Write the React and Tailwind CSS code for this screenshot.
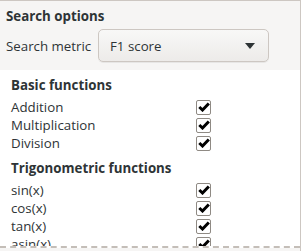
import React from 'react'

const basic = ["Addition", "Multiplication", "Division"];
const trig = ["sin(x)", "cos(x)", "tan(x)", "asin(x)"];

const Check = () => (
  <span className="w-[15px] h-[15px] rounded-[2px] border border-[#8f8a84] bg-white flex items-center justify-center">
    <svg width="12" height="10" viewBox="0 0 12 10">
      <path d="M1.3 5 L4.5 8 L10.8 1.5" fill="none" stroke="#000" strokeWidth="3" strokeLinejoin="miter" />
    </svg>
  </span>
)

const Row = ({ label }) => (
  <div className="flex items-center h-[18px]">
    <span className="w-[185px] text-[#2e3436]">{label}</span>
    <Check />
  </div>
)

const App = () => {
  return (
    <div className="w-[301px] h-[251px] overflow-hidden bg-[#f6f5f4] border-t border-r border-[#cdc7c2] text-[13.3px] leading-[18px]" style={{ fontFamily: '"Open Sans", "Noto Sans", sans-serif' }}>
      {/* ----Search options---- */}
      <div className='px-[6px] pt-[6px] h-[69px]'>
        <p className='font-bold text-[#2e3436]'>Search options</p>
        <div className='flex items-center mt-[4px]'>
          <span className='w-[92px] text-[#2e3436]'>Search metric</span>
          <div className='w-[171px] h-[33px] flex items-center justify-between px-[11px] rounded-[5px] border border-[#cdc7c2] bg-gradient-to-b from-[#f8f8f7] to-[#edebe9] shadow-[0_1px_0_rgba(0,0,0,0.06)]'>
            <span className='text-[#2e3436]'>F1 score</span>
            <svg width="10" height="6" viewBox="0 0 10 6" className='mr-[2px]'>
              <path d="M0 0 H10 L5 6 Z" fill="#2e3436" />
            </svg>
          </div>
        </div>
      </div>

      {/* ----Functions---- */}
      <div className='bg-white h-[178px] overflow-hidden border-b-2 border-dashed border-[#c4beb8] px-[11px] pt-[6px]'>
        <p className='font-bold text-[#2e3436]'>Basic functions</p>
        <div className='mt-[4px]'>
          {basic.map((b) => <Row key={b} label={b} />)}
        </div>
        <p className='font-bold text-[#2e3436] mt-[7px]'>Trigonometric functions</p>
        <div className='mt-[4px]'>
          {trig.map((t) => <Row key={t} label={t} />)}
        </div>
      </div>
    </div>
  )
}

export default App
